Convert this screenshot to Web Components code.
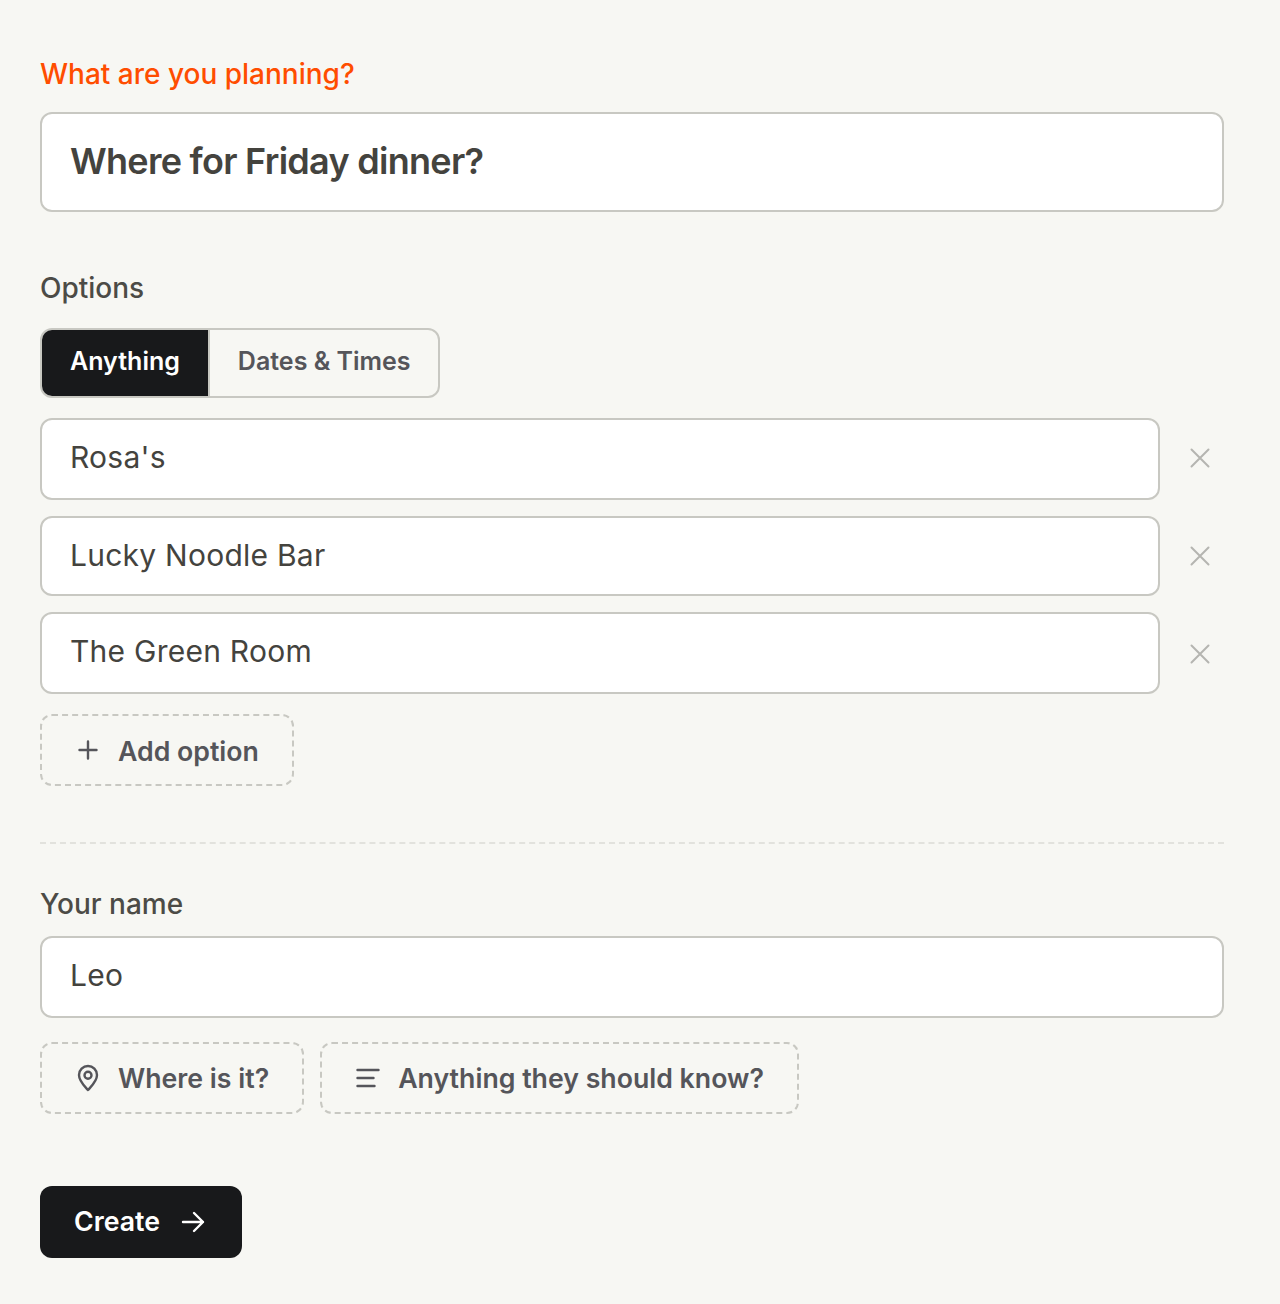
<!DOCTYPE html>
<html lang="en">
<head>
<meta charset="utf-8">
<title>Create</title>
<style>
  html, body { margin: 0; background: #f7f7f3; }
  body { font-family: Inter, "Liberation Sans", sans-serif; }
</style>
</head>
<body>
<plan-form>
  <field-label tone="accent" style="margin-top:56px">What are you planning?</field-label>
  <text-box size="title" style="margin-top:20px">Where for Friday dinner?</text-box>
  <field-label style="margin-top:58px">Options</field-label>
  <seg-control style="margin-top:22px"></seg-control>
  <option-row style="margin-top:20px;--x-shift:-1px">Rosa's</option-row>
  <option-row style="margin-top:16px;--box-height:80px;--text-lift:2px">Lucky Noodle Bar</option-row>
  <option-row style="margin-top:16px;--x-shift:1px">The Green Room</option-row>
  <div style="margin-top:20px"><ghost-button icon="plus">Add option</ghost-button></div>
  <dash-rule></dash-rule>
  <field-label style="margin-top:42px">Your name</field-label>
  <text-box style="margin-top:14px">Leo</text-box>
  <div style="margin-top:24px;display:flex;gap:16px;--text-drop:0px">
    <ghost-button icon="pin">Where is it?</ghost-button>
    <ghost-button icon="lines">Anything they should know?</ghost-button>
  </div>
  <div style="margin-top:72px"><create-button>Create</create-button></div>
</plan-form>

<script>
const ICONS = {
  plus: '<path d="M12 3.500v17M3.500 12h17"/>',
  pin: '<path d="M12 24C8.500 20 3 15.200 3 9a9 9 0 0 1 18 0c0 6.200-5.500 11-9 15Z"/><circle cx="12" cy="9.300" r="3.500"/>',
  lines: '<path d="M1.500 4h21M1.500 12h16M1.500 20h17"/>'
};

class PlanForm extends HTMLElement {
  constructor() {
    super();
    this.attachShadow({ mode: 'open' }).innerHTML = `
      <style>
        :host { display: block; box-sizing: border-box; width: 1280px; height: 1304px; padding: 0 56px 0 40px; background: #f7f7f3; overflow: hidden; }
      </style>
      <slot></slot>`;
  }
}

class FieldLabel extends HTMLElement {
  constructor() {
    super();
    this.attachShadow({ mode: 'open' }).innerHTML = `
      <style>
        :host { display: block; font: 500 28px/36px Inter, sans-serif; color: #4c4b46; }
        :host([tone="accent"]) { color: #ff4d00; }
      </style>
      <slot></slot>`;
  }
}

class TextBox extends HTMLElement {
  constructor() {
    super();
    this.attachShadow({ mode: 'open' }).innerHTML = `
      <style>
        :host { display: flex; align-items: center; box-sizing: border-box; height: var(--box-height, 82px); padding: 0 28px var(--text-lift, 4px); background: #fff; border: 2px solid #c8c8c2; border-radius: 12px; font: 400 30px/36px Inter, sans-serif; color: #44433e; letter-spacing: .25px; }
        :host([size="title"]) { height: 100px; padding-bottom: 2px; font-size: 36px; font-weight: 600; letter-spacing: -.72px; }
      </style>
      <slot></slot>`;
  }
}

class SegControl extends HTMLElement {
  constructor() {
    super();
    this.attachShadow({ mode: 'open' }).innerHTML = `
      <style>
        :host { display: inline-flex; box-sizing: border-box; height: 70px; border: 2px solid #c8c8c2; border-radius: 12px; overflow: hidden; font: 600 25px/32px Inter, sans-serif; vertical-align: top; }
        span { display: flex; align-items: center; padding: 0 28px 4px; }
        .on { background: #18191b; color: #fff; }
        .off { border-left: 2px solid #c8c8c2; padding-right: 27px; color: #55555a; }
      </style>
      <span class="on">Anything</span><span class="off">Dates &amp; Times</span>`;
  }
}

class OptionRow extends HTMLElement {
  constructor() {
    super();
    this.attachShadow({ mode: 'open' }).innerHTML = `
      <style>
        :host { display: flex; align-items: center; gap: 20px; padding-right: 4px; }
        text-box { flex: 1; }
        button { all: unset; display: flex; width: 40px; height: 40px; align-items: center; justify-content: center; }
        svg { width: 24px; height: 24px; fill: none; stroke: #b5b5b0; stroke-width: 2; stroke-linecap: round; transform: translateY(var(--x-shift, 0)); }
      </style>
      <text-box><slot></slot></text-box>
      <button aria-label="Remove"><svg viewBox="0 0 24 24"><path d="M3.500 3.500l17 17M20.500 3.500l-17 17"/></svg></button>`;
  }
}

class GhostButton extends HTMLElement {
  constructor() {
    super();
    const icon = ICONS[this.getAttribute('icon')] || '';
    this.attachShadow({ mode: 'open' }).innerHTML = `
      <style>
        :host { display: inline-flex; align-items: center; gap: 18px; box-sizing: border-box; height: 72px; padding: 0 33px 0 34px; border: 2px dashed #c8c8c2; border-radius: 12px; font: 600 26.700px/32px Inter, sans-serif; color: #55555a; vertical-align: top; }
        svg { width: 24px; height: 24px; overflow: visible; fill: none; stroke: currentColor; stroke-width: 2.400; stroke-linecap: round; stroke-linejoin: round; }
        span { padding-top: var(--text-drop, 2px); }
      </style>
      <svg viewBox="0 0 24 24">${icon}</svg><span><slot></slot></span>`;
  }
}

class DashRule extends HTMLElement {
  constructor() {
    super();
    this.attachShadow({ mode: 'open' }).innerHTML = `
      <style>
        :host { display: block; margin-top: 56px; height: 0; border-top: 2px dashed #e2e2dd; }
      </style>`;
  }
}

class CreateButton extends HTMLElement {
  constructor() {
    super();
    this.attachShadow({ mode: 'open' }).innerHTML = `
      <style>
        :host { display: inline-flex; align-items: center; gap: 20px; box-sizing: border-box; height: 72px; padding: 0 36px 0 34px; background: #18191b; border-radius: 12px; font: 600 26.700px/32px Inter, sans-serif; color: #fff; vertical-align: top; }
        span { padding-bottom: 2px; }
        svg { width: 26px; height: 26px; fill: none; stroke: currentColor; stroke-width: 2.400; stroke-linecap: round; stroke-linejoin: round; }
      </style>
      <span><slot></slot></span><svg viewBox="0 0 26 26"><path d="M3 13h20M14 4l9 9-9 9"/></svg>`;
  }
}

customElements.define('plan-form', PlanForm);
customElements.define('field-label', FieldLabel);
customElements.define('text-box', TextBox);
customElements.define('seg-control', SegControl);
customElements.define('option-row', OptionRow);
customElements.define('ghost-button', GhostButton);
customElements.define('dash-rule', DashRule);
customElements.define('create-button', CreateButton);
</script>
</body>
</html>
